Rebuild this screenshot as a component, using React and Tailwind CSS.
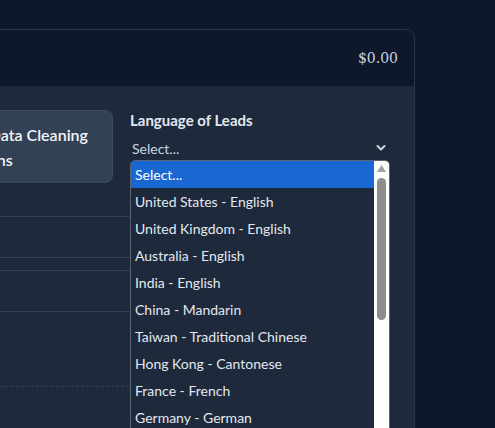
import React from "react";

const languages = [
  "Select...",
  "United States - English",
  "United Kingdom - English",
  "Australia - English",
  "India - English",
  "China - Mandarin",
  "Taiwan - Traditional Chinese",
  "Hong Kong - Cantonese",
  "France - French",
  "Germany - German",
  "Spain - Spanish",
  "Japan - Japanese",
];

function Chevron() {
  return (
    <svg width="10" height="6" viewBox="0 0 10 6" className="text-[#cbd5e1]">
      <polyline points="1.5,1 5,4.5 8.5,1" fill="none" stroke="currentColor" strokeWidth="2" strokeLinecap="round" strokeLinejoin="round" />
    </svg>
  );
}

function LanguageSelect() {
  return (
    <div className="flex flex-col">
      <label className="text-[15px] leading-5 font-bold text-[#e2e8f0]">Language of Leads</label>
      <div className="relative mt-[6px]">
        <div className="h-6 flex items-center justify-between pl-[2px] pr-[4px] text-[14px] text-[#cbd5e1]">
          <span>Select...</span>
          <Chevron />
        </div>

        {/* open option list */}
        <div className="absolute left-0 top-full w-full z-10 bg-[#1e293b] border border-[#5b6472] rounded-t-[5px] overflow-hidden flex">
          <ul className="flex-1 min-w-0">
            {languages.map((lang, i) => (
              <li
                key={lang}
                className={`h-[27px] flex items-center px-1 text-[14px] ${i === 0 ? "bg-[#1967d2] text-white" : "text-[#e2e8f0]"}`}
              >
                {lang}
              </li>
            ))}
          </ul>
          <div className="w-[15px] bg-[#fdfdfd] flex flex-col items-center pt-[4px]">
            <svg width="9" height="7" viewBox="0 0 9 7">
              <polygon points="4.5,0 9,7 0,7" fill="#a3a3a3" />
            </svg>
            <div className="mt-[6px] w-[9px] h-[142px] rounded-full bg-[#8e8e8e]" />
          </div>
        </div>
      </div>
    </div>
  );
}

export default function App() {
  return (
    <div className="h-screen overflow-hidden bg-[#0f172a] pt-[29px]" style={{ fontFamily: "Lato, sans-serif" }}>
      <div className="w-[640px] ml-[-225px] border border-[#2a3547] rounded-lg overflow-visible">
        <div className="h-14 flex items-center justify-end px-4">
          <span className="font-['DejaVu_Serif',serif] text-[14px] text-[#cbd5e1]">$0.00</span>
        </div>

        <div className="bg-[#1e293b] px-6 pt-6 pb-16">
          <div className="grid grid-cols-[minmax(0,1fr)_260px] gap-[17px]">
            <div className="flex justify-end gap-3 min-w-0">
              <button className="flex-1 min-w-0 h-[73px] px-4 flex items-center text-left rounded-lg bg-[#334155] border border-[#3e4a5d] text-[16px] leading-[25px] font-semibold text-[#f1f5f9]">
                Add Field Mapping
              </button>
              <button className="w-[174px] shrink-0 h-[73px] px-4 flex items-center text-left rounded-lg bg-[#334155] border border-[#3e4a5d] text-[16px] leading-[25px] font-semibold text-[#f1f5f9]">
                Add Data Cleaning Options
              </button>
            </div>
            <LanguageSelect />
          </div>

          <div className="mt-[33px] flex flex-col gap-3">
            <div className="h-[42px] rounded-lg border border-[#334155]" />
            <div className="h-[42px] rounded-lg border border-[#334155]" />
          </div>

          <div className="mt-[74px] border-t border-dashed border-[#334155]" />
        </div>
      </div>
    </div>
  );
}
